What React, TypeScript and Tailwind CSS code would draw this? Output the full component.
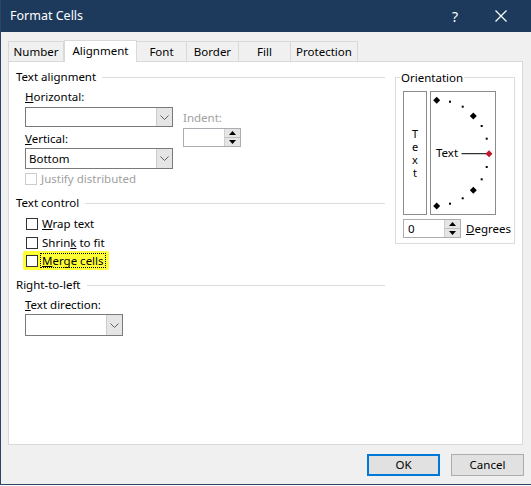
import React from 'react';

const font = { fontFamily: '"Noto Sans", "Open Sans", sans-serif' };

const Chevron = () => (
  <svg width="9" height="5" viewBox="0 0 9 5">
    <polyline points="0.5,0.5 4.5,4.5 8.5,0.5" fill="none" stroke="#606060" strokeWidth="1" />
  </svg>
);

const Dropdown = ({ value, width }: { value?: string; width: string }) => (
  <div className={`flex h-full ${width} border border-[#7a7a7a] bg-white`}>
    <div className="flex-1 pl-[3px] flex items-center text-[11.5px]">{value}</div>
    <div className="w-[16px] bg-[#e5e5e5] border-l border-[#cccccc] flex items-center justify-center">
      <Chevron />
    </div>
  </div>
);

const Spin = ({ value, width }: { value?: string; width: string }) => (
  <div className={`flex h-full ${width} border border-[#abadb3] bg-white`}>
    <div className="flex-1 pl-[4px] flex items-center text-[11.5px]">{value}</div>
    <div className="w-[16px] flex flex-col border-l border-[#cfcfcf]">
      <div className="flex-1 bg-[#e5e5e5] border-b border-[#c0c0c0] flex items-center justify-center">
        <svg width="7" height="4" viewBox="0 0 7 4"><polygon points="0,4 7,4 3.5,0" fill="#000" /></svg>
      </div>
      <div className="flex-1 bg-[#e5e5e5] flex items-center justify-center">
        <svg width="7" height="4" viewBox="0 0 7 4"><polygon points="0,0 7,0 3.5,4" fill="#000" /></svg>
      </div>
    </div>
  </div>
);

const Header = ({ label, className }: { label: string; className: string }) => (
  <div className={`flex items-center h-[16px] ${className}`}>
    <span className="text-[11.5px] whitespace-nowrap">{label}</span>
    <div className="flex-1 ml-[6px] h-px bg-[#dcdcdc]" />
  </div>
);

const Box = ({ disabled }: { disabled?: boolean }) => (
  <div className={`w-[12px] h-[12px] border bg-white ${disabled ? 'border-[#cccccc]' : 'border-[#333333]'}`} />
);

const tabs = ['Number', 'Alignment', 'Font', 'Border', 'Fill', 'Protection'];
const tabWidths = ['w-[56px]', 'w-[73px]', 'w-[51px]', 'w-[53px]', 'w-[53px]', 'w-[68px]'];

export default function App() {
  const dial = [
    { x: 6.7, y: 9.3, big: true },
    { x: 20, y: 10.7 },
    { x: 32.7, y: 15.7 },
    { x: 43.3, y: 25, big: true },
    { x: 51.7, y: 35 },
    { x: 56.7, y: 47.7 },
    { x: 56.7, y: 76 },
    { x: 51.7, y: 88.3 },
    { x: 43.3, y: 99.3, big: true },
    { x: 32.7, y: 107.3 },
    { x: 20, y: 112.7 },
    { x: 6.7, y: 115, big: true },
  ];

  return (
    <div className="w-[531px] h-[486px] bg-white overflow-hidden" style={font}>
      <div className="h-[485px] flex flex-col bg-[#f0f0f0] border-l border-b border-[#2b4566]">
        {/* title bar */}
        <div className="h-[32px] bg-[#1d3a5d] flex items-center text-white shrink-0">
          <span className="ml-[9px] text-[12.5px] flex-1">Format Cells</span>
          <span className="text-[14px] w-[20px] text-center">?</span>
          <svg className="ml-[30px] mr-[24px]" width="12" height="12" viewBox="0 0 12 12">
            <path d="M0.5 0.5 L11.5 11.5 M11.5 0.5 L0.5 11.5" stroke="#fff" strokeWidth="1.2" />
          </svg>
        </div>

        <div className="px-[7px] pt-[7px] flex flex-col flex-1">
          {/* tabs */}
          <div className="flex items-end h-[22px] relative z-10">
            {tabs.map((t, i) =>
              t === 'Alignment' ? (
                <div
                  key={t}
                  className={`${tabWidths[i]} h-[22px] -mb-px bg-white border border-b-0 border-[#d9d9d9] flex items-center justify-center text-[11.5px] pb-[2px]`}
                >
                  {t}
                </div>
              ) : (
                <div
                  key={t}
                  className={`${tabWidths[i]} h-[20px] bg-[#f0f0f0] border border-b-0 border-[#d9d9d9] -ml-px first:ml-0 flex items-center justify-center text-[11.5px]`}
                >
                  {t}
                </div>
              )
            )}
          </div>

          {/* panel */}
          <div className="h-[384px] w-[515px] bg-white border border-[#d9d9d9] flex">
            {/* left column */}
            <div className="w-[376px] pl-[7px] flex flex-col">
              <Header label="Text alignment" className="mt-[7px]" />
              <div className="flex">
                <div className="flex flex-col ml-[9px]">
                  <div className="h-[16px] mt-[4px] flex items-center text-[11.5px]">
                    <span><span className="underline">H</span>orizontal:</span>
                  </div>
                  <div className="h-[20px] mt-[2px]"><Dropdown width="w-[148px]" /></div>
                  <div className="h-[16px] mt-[4px] flex items-center text-[11.5px]">
                    <span><span className="underline">V</span>ertical:</span>
                  </div>
                  <div className="h-[21px] mt-[1px]"><Dropdown value="Bottom" width="w-[148px]" /></div>
                  <div className="h-[12px] mt-[4px] flex items-center">
                    <Box disabled />
                    <span className="ml-[4px] text-[11.5px] text-[#a0a0a0]">Justify distributed</span>
                  </div>
                </div>
                <div className="flex flex-col ml-[10px]">
                  <div className="h-[16px] mt-[25px] flex items-center text-[11.5px] text-[#a0a0a0]">Indent:</div>
                  <div className="h-[19px] mt-[2px]"><Spin width="w-[58px]" /></div>
                </div>
              </div>

              <Header label="Text control" className="mt-[10px]" />
              <div className="h-[16px] mt-[5px] ml-[10px] flex items-center">
                <Box />
                <span className="ml-[4px] text-[11.5px]"><span className="underline">W</span>rap text</span>
              </div>
              <div className="h-[16px] mt-[3px] ml-[10px] flex items-center">
                <Box />
                <span className="ml-[4px] text-[11.5px]">Shrin<span className="underline">k</span> to fit</span>
              </div>
              <div className="mt-[0px] ml-[7px] self-start h-[19px] px-[3px] bg-[#ffff33] rounded-[2px] flex items-center">
                <Box />
                <span className="ml-[2px] px-[1px] h-[15px] leading-[13px] border border-dotted border-black text-[11.5px]">
                  <span className="underline">M</span>erge cells
                </span>
              </div>

              <Header label="Right-to-left" className="mt-[7px]" />
              <div className="h-[16px] mt-[4px] ml-[9px] flex items-center text-[11.5px]">
                <span><span className="underline">T</span>ext direction:</span>
              </div>
              <div className="h-[22px] mt-[1px] ml-[9px]"><Dropdown width="w-[98px]" /></div>
            </div>

            {/* orientation */}
            <div className="ml-[10px] w-[120px]">
              <div className="relative mt-[15px] h-[167px] border border-[#dcdcdc] pt-[13px] pl-[7px]">
                <span className="absolute -top-[9px] left-[4px] bg-white px-[1px] text-[11.5px]">Orientation</span>
                <div className="flex gap-[3px]">
                  <div className="w-[24px] h-[124px] border border-[#8c8c8c] flex items-center justify-center">
                    <span className="text-center text-[11px] leading-[13px]">
                      T<br />e<br />x<br />t
                    </span>
                  </div>
                  <div className="w-[66px] h-[124px] border border-[#8c8c8c] relative">
                    <svg className="absolute -left-px -top-px" width="66" height="124" viewBox="0 0 66 124">
                      {dial.map((p, i) =>
                        p.big ? (
                          <polygon
                            key={i}
                            points={`${p.x},${p.y - 3.5} ${p.x + 3.5},${p.y} ${p.x},${p.y + 3.5} ${p.x - 3.5},${p.y}`}
                            fill="#000"
                          />
                        ) : (
                          <rect key={i} x={p.x - 1} y={p.y - 1} width="2" height="2" fill="#000" />
                        )
                      )}
                      <line x1="31.5" y1="62.7" x2="57" y2="62.7" stroke="#000" strokeWidth="1" />
                      <polygon points="59,59.2 62.5,62.7 59,66.2 55.5,62.7" fill="#c0182c" />
                    </svg>
                    <span className="absolute left-[5px] top-[53px] text-[11.5px] leading-[16px]">Text</span>
                  </div>
                </div>
                <div className="flex items-center mt-[4px] h-[19px]">
                  <Spin value="0" width="w-[58px]" />
                  <span className="ml-[5px] text-[11.5px]"><span className="underline">D</span>egrees</span>
                </div>
              </div>
            </div>
          </div>

          {/* buttons */}
          <div className="flex justify-end gap-[11px] mt-[9px]">
            <div className="w-[73px] h-[22px] border-2 border-[#0078d7] bg-[#e1e1e1] flex items-center justify-center text-[11.5px]">OK</div>
            <div className="w-[73px] h-[22px] border border-[#adadad] bg-[#e1e1e1] flex items-center justify-center text-[11.5px]">Cancel</div>
          </div>
        </div>
      </div>
    </div>
  );
}
